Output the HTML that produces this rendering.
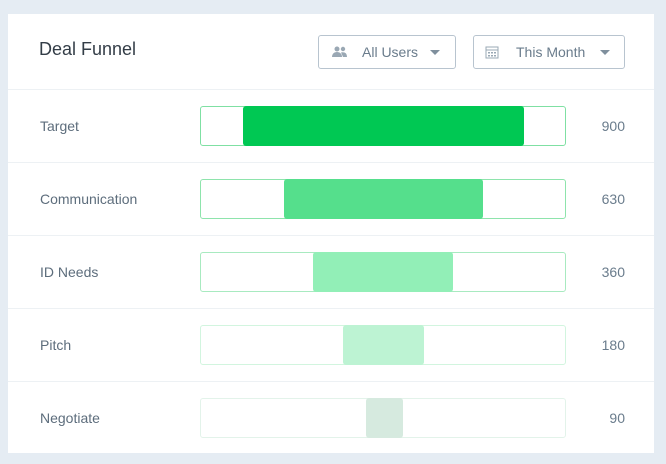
<!DOCTYPE html>
<html><head><style>
body{margin:0;width:666px;height:464px;background:#e5ecf3;font-family:"Liberation Sans",sans-serif;overflow:hidden}
.card{position:absolute;left:8px;top:14px;width:646px;height:439px;background:#fff}
.title{position:absolute;left:31px;top:25px;font-size:18px;color:#333d47}
.btn{position:absolute;top:21px;height:34px;border:1px solid #b8c4cf;border-radius:3px;box-sizing:border-box;font-size:14px;color:#6a7c8c;line-height:32px}
.caret{position:absolute;top:14px;width:0;height:0;border-left:5px solid transparent;border-right:5px solid transparent;border-top:5px solid #7f8f9d}
.row{position:absolute;left:0;width:646px;height:73px;border-top:1px solid #edf1f4;box-sizing:border-box}
.lbl{position:absolute;left:32px;top:28px;font-size:14px;color:#5d6d7c}
.bar{position:absolute;left:192px;top:16px;width:366px;height:40px;border:1px solid;border-radius:3px;box-sizing:border-box}
.fill{position:absolute;top:-1px;height:40px;border-radius:3px}
.num{position:absolute;right:29px;top:28px;font-size:14px;color:#6a7c8c}
</style></head><body>
<div class="card">
<div class="title">Deal Funnel</div>
<div class="btn" style="left:310px;width:138px">
<svg style="position:absolute;left:13px;top:10px" width="16" height="12" viewBox="0 0 16 12"><circle cx="5" cy="3" r="2.5" fill="#9aa8b4"/><circle cx="11" cy="3" r="2.2" fill="#9aa8b4"/><path d="M0 11c0-3 2-5 5-5s5 2 5 5z" fill="#9aa8b4"/><path d="M9 6.5c1-0.5 4-0.5 5 1s1 3.5 1 3.5h-4z" fill="#9aa8b4"/></svg>
<span style="position:absolute;left:43px">All Users</span><div class="caret" style="left:111px"></div></div>
<div class="btn" style="left:465px;width:152px">
<svg style="position:absolute;left:11px;top:9px" width="14" height="14" viewBox="0 0 14 14"><rect x="1" y="2" width="12" height="11" fill="none" stroke="#9aa8b4"/><line x1="1" y1="5" x2="13" y2="5" stroke="#9aa8b4"/><g fill="#9aa8b4"><rect x="3" y="7" width="2" height="1.5"/><rect x="6" y="7" width="2" height="1.5"/><rect x="9" y="7" width="2" height="1.5"/><rect x="3" y="10" width="2" height="1.5"/><rect x="6" y="10" width="2" height="1.5"/><rect x="9" y="10" width="2" height="1.5"/></g></svg>
<span style="position:absolute;left:42px">This Month</span><div class="caret" style="left:126px"></div></div>

<div class="row" style="top:75px"><div class="lbl">Target</div><div class="bar" style="border-color:#7fe0a3"><div class="fill" style="left:42px;width:281px;background:#00c853"></div></div><div class="num">900</div></div>
<div class="row" style="top:148px"><div class="lbl">Communication</div><div class="bar" style="border-color:#8ee4ac"><div class="fill" style="left:83px;width:199px;background:#55df8c"></div></div><div class="num">630</div></div>
<div class="row" style="top:221px"><div class="lbl">ID Needs</div><div class="bar" style="border-color:#a8eac0"><div class="fill" style="left:112px;width:140px;background:#92efb7"></div></div><div class="num">360</div></div>
<div class="row" style="top:294px"><div class="lbl">Pitch</div><div class="bar" style="border-color:#d2f5df"><div class="fill" style="left:142px;width:81px;background:#bdf3d3"></div></div><div class="num">180</div></div>
<div class="row" style="top:367px;height:72px"><div class="lbl">Negotiate</div><div class="bar" style="border-color:#e3f3ea"><div class="fill" style="left:165px;width:37px;background:#d6eadf"></div></div><div class="num">90</div></div>
</div>
</body></html>
